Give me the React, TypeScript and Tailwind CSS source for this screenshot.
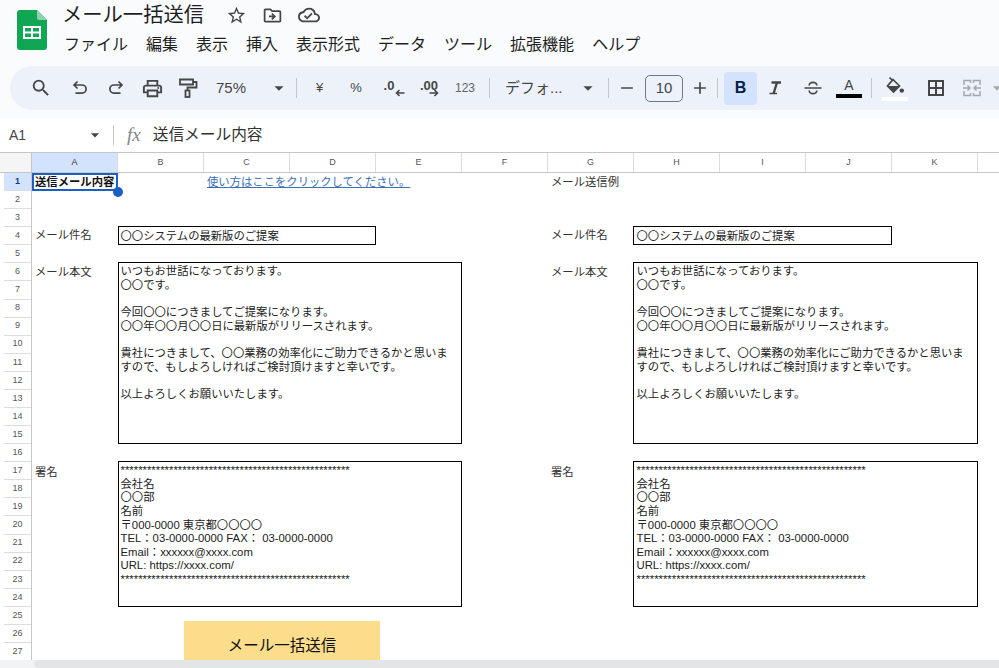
import React from "react";
import { MdSearch, MdOutlinePrint, MdStarBorder, MdOutlineDriveFileMove, MdOutlineCloudDone, MdArrowDropDown, MdAdd, MdRemove } from "react-icons/md";

const FONT = "font-['Liberation_Sans','Noto_Sans_CJK_JP',sans-serif]";
const cols = ["A", "B", "C", "D", "E", "F", "G", "H", "I", "J", "K", ""];
const rows = Array.from({ length: 27 }, (_, i) => i + 1);
const bodyLines = [
  "いつもお世話になっております。",
  "〇〇です。",
  "",
  "今回〇〇につきましてご提案になります。",
  "〇〇年〇〇月〇〇日に最新版がリリースされます。",
  "",
  "貴社につきまして、〇〇業務の効率化にご助力できるかと思いま",
  "すので、もしよろしければご検討頂けますと幸いです。",
  "",
  "以上よろしくお願いいたします。",
];
const stars = "*".repeat(52);
const sigLines = [
  stars, "会社名", "〇〇部", "名前", "〒000-0000 東京都〇〇〇〇",
  "TEL：03-0000-0000 FAX： 03-0000-0000", "Email：xxxxxx@xxxx.com", "URL: https://xxxx.com/", stars,
];

function Lines({ lines }: { lines: string[] }) {
  return (
    <>
      {lines.map((l, i) => (
        <div key={i} className="h-[13.6px] whitespace-nowrap">{l}</div>
      ))}
    </>
  );
}

function Sep() {
  return <div className="w-px h-[20px] bg-[#c7c7c7] shrink-0" />;
}

function Btn({ w = "w-[36px]", children }: { w?: string; children?: React.ReactNode }) {
  return <div className={`${w} h-[36px] flex items-center justify-center shrink-0 text-[#444746]`}>{children}</div>;
}

function Logo() {
  return (
    <svg width="30" height="40" viewBox="0 0 30 40" className="shrink-0">
      <path d="M3 0H20L30 10V37a3 3 0 0 1-3 3H3a3 3 0 0 1-3-3V3a3 3 0 0 1 3-3Z" fill="#11a653" />
      <path d="M20 0L30 10H22a2 2 0 0 1-2-2Z" fill="#8ed1ac" />
      <path d="M6 16H24V29H6ZM8 18V21.5H14V18ZM16 18V21.5H22V18ZM8 23.5V27H14V23.5ZM16 23.5V27H22V23.5Z" fill="#fff" fillRule="evenodd" />
    </svg>
  );
}

function Undo({ flip }: { flip?: boolean }) {
  return (
    <svg width="20" height="20" viewBox="0 0 20 20" fill="none" stroke="#444746" strokeWidth="1.7" className={flip ? "-scale-x-100" : ""}>
      <path d="M7.5 3.5L4 7l3.5 3.5M4.5 7H12a4 4 0 0 1 0 8.2H5.5" />
    </svg>
  );
}

function Roller() {
  return (
    <svg width="22" height="22" viewBox="0 0 22 22" fill="none" stroke="#444746" strokeWidth="1.8">
      <path d="M3 2.5H16V7.5H3ZM16 5H19.5V10.5H10.5V13.5" />
      <rect x="8.5" y="13.5" width="4" height="6.5" />
    </svg>
  );
}

function Merge() {
  return (
    <svg width="22" height="22" viewBox="0 0 22 22" fill="none" stroke="#a5a8ab" strokeWidth="1.5">
      <path d="M3 8V3.5H9.5V6M19 8V3.5H12.5V6M3 14V18.5H9.5V16M19 14V18.5H12.5V16M2 11H8.5M13.5 11H20M6.5 8.5l2.5 2.5-2.5 2.5M15.5 8.5l-2.5 2.5 2.5 2.5" />
    </svg>
  );
}

function Strike() {
  return (
    <svg width="22" height="22" viewBox="0 0 22 22" fill="none" stroke="#444746" strokeWidth="1.7">
      <path d="M2.5 11H19.5M7.2 8.5a3.8 3.2 0 0 1 7.6 0M7.2 13.5a3.8 3.2 0 0 0 7.6 0" />
    </svg>
  );
}

function Italic() {
  return (
    <svg width="20" height="20" viewBox="0 0 20 20" fill="none" stroke="#444746">
      <path d="M6.5 4.5H16" strokeWidth="2.4" />
      <path d="M12 4.5L8.6 15.5" strokeWidth="2.4" />
      <path d="M4.5 15.5H12" strokeWidth="1.6" />
    </svg>
  );
}

function Fill() {
  return (
    <svg width="20" height="21" viewBox="0 0 20 21" className="shrink-0">
      <path d="M4.5 1.5L8 5" fill="none" stroke="#444746" strokeWidth="1.7" />
      <path d="M8 3.5L14.5 10 8.5 16 2.5 10Z" fill="none" stroke="#444746" strokeWidth="1.7" />
      <path d="M2.5 10H14.5L8.5 16Z" fill="#444746" />
      <circle cx="16.8" cy="14.6" r="2.2" fill="#444746" />
    </svg>
  );
}

function Borders() {
  return (
    <svg width="20" height="20" viewBox="0 0 20 20" fill="none" stroke="#444746" strokeWidth="2">
      <rect x="3" y="3" width="14" height="14" />
      <path d="M10 3V17M3 10H17" />
    </svg>
  );
}

function SmallArrow({ left }: { left?: boolean }) {
  return (
    <svg width="10" height="8" viewBox="0 0 10 8" fill="none" stroke="#444746" strokeWidth="1.6" className={left ? "-scale-x-100" : ""}>
      <path d="M0.5 4H8.5M5.5 1L8.5 4L5.5 7" />
    </svg>
  );
}

function Toolbar() {
  return (
    <div className="ml-[10px] h-[44px] rounded-l-full bg-[#edf2fa] flex items-center pl-[13px] overflow-hidden">
      <Btn><MdSearch size={22} /></Btn>
      <div className="w-[3px] shrink-0" />
      <Btn><Undo /></Btn>
      <Btn><Undo flip /></Btn>
      <Btn><MdOutlinePrint size={23} /></Btn>
      <Btn><Roller /></Btn>
      <div className="w-[90px] shrink-0 flex items-center text-[15px] text-[#444746] pl-[10px]">
        <span className="w-[52px]">75%</span>
        <MdArrowDropDown size={22} className="shrink-0" />
      </div>
      <Sep />
      <div className="w-[4px] shrink-0" />
      <Btn w="w-[37px]"><span className="text-[13px]">¥</span></Btn>
      <Btn><span className="text-[13px]">%</span></Btn>
      <Btn w="w-[37px]">
        <span className="relative text-[13px] font-bold leading-none -mt-[5px] ml-[1px] pr-[8px]">.0
          <span className="absolute left-[11px] top-[10px]"><SmallArrow left /></span>
        </span>
      </Btn>
      <Btn>
        <span className="relative text-[13px] font-bold leading-none -mt-[5px]">.00
          <span className="absolute left-[9px] top-[10px]"><SmallArrow /></span>
        </span>
      </Btn>
      <Btn><span className="text-[12px] text-[#5f6368]">123</span></Btn>
      <div className="w-[6px] shrink-0" />
      <Sep />
      <div className="w-[118px] shrink-0 flex items-center text-[15px] text-[#444746] pl-[15px]">
        <span className="w-[72px] whitespace-nowrap">デフォ...</span>
        <MdArrowDropDown size={22} className="shrink-0" />
      </div>
      <Sep />
      <Btn><MdRemove size={20} /></Btn>
      <div className="w-[38px] h-[27px] rounded-[5px] border border-[#747775] flex items-center justify-center text-[15px] text-[#444746] shrink-0">10</div>
      <Btn w="w-[34px]"><MdAdd size={20} /></Btn>
      <Sep />
      <div className="w-[6px] shrink-0" />
      <div className="w-[33px] h-[33px] rounded-[4px] bg-[#d3e3fd] flex items-center justify-center shrink-0 text-[#041e49] font-bold text-[16px]">B</div>
      <Btn><Italic /></Btn>
      <div className="w-[2px] shrink-0" />
      <Btn><Strike /></Btn>
      <Btn>
        <div className="flex flex-col items-center">
          <span className="text-[14px] leading-[14px] font-medium">A</span>
          <div className="w-[26px] h-[4px] bg-black mt-[2px]" />
        </div>
      </Btn>
      <div className="w-[4px] shrink-0" />
      <Sep />
      <Btn w="w-[46px]">
        <div className="flex flex-col items-center">
          <Fill />
          <div className="w-[26px] h-[4px] bg-white" />
        </div>
      </Btn>
      <Btn><Borders /></Btn>
      <Btn><Merge /></Btn>
      <MdArrowDropDown size={20} className="shrink-0 text-[#a5a8ab] -ml-[3px]" />
    </div>
  );
}

function Box({ className, right, children }: { className: string; right?: boolean; children: React.ReactNode }) {
  return (
    <div className={`border border-black pt-[2px] -mt-[1px] text-[#222] overflow-hidden bg-white z-10 ${right ? "-ml-[1px] pl-[2.5px]" : "pl-[1.5px]"} ${className}`}>
      {children}
    </div>
  );
}

export default function App() {
  return (
    <div className={`w-[999px] h-[668px] overflow-hidden flex flex-col bg-white ${FONT}`}>
      <div className="h-[118px] bg-[#f9fbfd] shrink-0">
        <div className="h-[66px] flex">
          <div className="pl-[17px] pr-[15px] pt-[10px] shrink-0"><Logo /></div>
          <div className="flex flex-col">
            <div className="h-[30px] flex items-center text-[#1f1f1f]">
              <span className="text-[20.3px] leading-[30px] -mt-[1px]">メール一括送信</span>
              <div className="flex items-center ml-[22px] gap-[15px] text-[#444746]">
                <MdStarBorder size={21} />
                <MdOutlineDriveFileMove size={21} />
                <MdOutlineCloudDone size={22} />
              </div>
            </div>
            <div className="flex items-center gap-[18px] text-[16px] text-[#1f1f1f] h-[30px] ml-[2px]">
              {["ファイル", "編集", "表示", "挿入", "表示形式", "データ", "ツール", "拡張機能", "ヘルプ"].map((m) => (
                <span key={m} className="whitespace-nowrap">{m}</span>
              ))}
            </div>
          </div>
        </div>
        <Toolbar />
      </div>

      <div className="h-[34px] shrink-0 flex items-center text-[#444746]">
        <div className="w-[105px] flex items-center justify-between pl-[9px] text-[14px]">
          <span>A1</span>
          <MdArrowDropDown size={20} />
        </div>
        <div className="w-px h-[20px] bg-[#c7c7c7] ml-[8px]" />
        <span className="font-['Liberation_Serif'] italic text-[19px] ml-[13px] text-[#80868b]">fx</span>
        <span className="text-[15.7px] ml-[12px] text-[#333]">送信メール内容</span>
      </div>

      <div className="relative h-[508px] shrink-0 overflow-hidden border-t border-[#c4c7c5]">
        <div className="flex h-[20px] border-b border-[#c4c7c5] text-[9px] text-[#555]">
          <div className="w-[32px] bg-[#f5f5f5] border-r border-[#c4c7c5] shrink-0" />
          {cols.map((c, i) => (
            <div key={i} className={`w-[86px] shrink-0 flex items-center justify-center border-r border-[#dadce0] ${c === "A" ? "bg-[#d3e3fd] text-[#333]" : ""}`}>{c}</div>
          ))}
        </div>
        <div className="flex">
          <div className="w-[32px] shrink-0 border-r border-[#c4c7c5]">
            {rows.map((r) => (
              <div key={r} className={`h-[18.08px] flex items-center justify-center text-[9px] border-b border-[#dadce0] ml-[4px] ${r === 1 ? "bg-[#d3e3fd] text-[#0b3f8f] font-bold" : "text-[#555]"}`}>{r}</div>
            ))}
          </div>
          <div className="grid grid-cols-[repeat(12,86px)] grid-rows-[repeat(27,18.08px)] text-[11.33px] text-[#333] leading-[18px]">
            <div className="col-start-1 row-start-1 border-2 border-[#1a5fc4] font-bold text-[#111] pl-[1px] whitespace-nowrap overflow-hidden leading-[14px] relative z-20">送信メール内容</div>
            <a className="col-start-3 col-span-3 row-start-1 text-[#3d6fb6] underline whitespace-nowrap pl-[3px]">使い方はここをクリックしてください。</a>
            <div className="col-start-7 row-start-1 pl-[3px]">メール送信例</div>

            <div className="col-start-1 row-start-4 pl-[3px] -mt-[1px]">メール件名</div>
            <Box className="col-start-2 col-span-3 row-start-4 leading-[15px]">〇〇システムの最新版のご提案</Box>
            <div className="col-start-7 row-start-4 pl-[3px] -mt-[1px]">メール件名</div>
            <Box right className="col-start-8 col-span-3 row-start-4 leading-[15px]">〇〇システムの最新版のご提案</Box>

            <div className="col-start-1 row-start-6 pl-[3px]">メール本文</div>
            <Box className="col-start-2 col-span-4 row-start-6 row-span-10 leading-[13.6px]"><Lines lines={bodyLines} /></Box>
            <div className="col-start-7 row-start-6 pl-[3px]">メール本文</div>
            <Box right className="col-start-8 col-span-4 row-start-6 row-span-10 leading-[13.6px]"><Lines lines={bodyLines} /></Box>

            <div className="col-start-1 row-start-17 pl-[3px] mt-[1px]">署名</div>
            <Box className="col-start-2 col-span-4 row-start-17 row-span-8 leading-[13.6px]"><Lines lines={sigLines} /></Box>
            <div className="col-start-7 row-start-17 pl-[3px] mt-[1px]">署名</div>
            <Box right className="col-start-8 col-span-4 row-start-17 row-span-8 leading-[13.6px]"><Lines lines={sigLines} /></Box>
          </div>
        </div>
        <div className="absolute left-[113px] top-[34px] w-[10px] h-[10px] rounded-full bg-[#1a5fc4] z-30" />
        <div className="absolute left-[184px] top-[468px] w-[196px] h-[50px] bg-[#fbdd8c] flex items-center justify-center text-[15.5px] text-[#111] z-20">メール一括送信</div>
      </div>

      <div className="h-[8px] shrink-0 bg-[#f1f3f4] flex pl-[34px]">
        <div className="flex-1 bg-[#e3e5e6] rounded-l-[4px]" />
      </div>
    </div>
  );
}
